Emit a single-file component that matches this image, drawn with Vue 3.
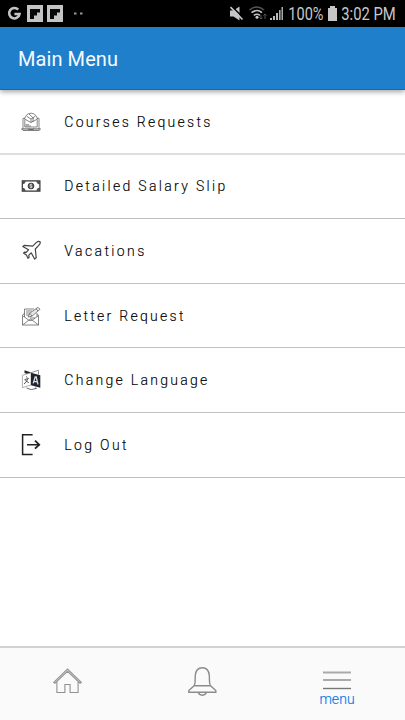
<script setup>
const items = [
  { icon: 'course', label: 'Courses Requests', width: 147.8 },
  { icon: 'money', label: 'Detailed Salary Slip', width: 162.8 },
  { icon: 'plane', label: 'Vacations', width: 81.8 },
  { icon: 'letter', label: 'Letter Request', width: 121 },
  { icon: 'language', label: 'Change Language', width: 144.8 },
  { icon: 'logout', label: 'Log Out', width: 64 }
]
</script>

<template>
  <main class="screen">
    <div class="status">
      <svg class="notifications" width="90" height="27" viewBox="0 0 90 27">
        <path d="M18.2 9.7A5.2 5.2 0 1 0 19.5 14H14.4" fill="none" stroke="#c4c4c4" stroke-width="2.6" />
        <g v-for="x in [27, 47]" :key="x" :transform="`translate(${x} 5)`">
          <path d="M0 0H16V17H0Z" fill="#c4c4c4" />
          <path d="M3 4H13V7.5H10V10.5H7V14H3Z" fill="#080808" />
        </g>
        <path d="M74 12.5H76.5V14.5H74ZM80 12.5H82.5V14.5H80Z" fill="#999" />
      </svg>
      <svg class="system" width="177" height="27" viewBox="228 0 177 27">
        <path d="M230 10.5H233.5L239.5 6.5V20.5L233.5 16.5H230Z" fill="#c6c6c6" />
        <path d="M231.5 6L244 18.5" stroke="#000" stroke-width="1.6" />
        <path d="M230.5 7.2L242.5 19.5" stroke="#c6c6c6" stroke-width="1.7" />
        <g fill="none" stroke-width="1.6">
          <path d="M249.5 10Q256.5 4 264 10" stroke="#555" />
          <path d="M251.5 12.7Q257 8.3 262 12.7M253.8 15.4Q257 13 260 15.4" stroke="#c4c4c4" />
          <path d="M261 15V19M259.5 17.5L261 19L262.5 17.5M265 19V14M263.5 15.5L265 14L266.5 15.5" stroke="#555" stroke-width="1" />
        </g>
        <circle cx="257" cy="17.3" r="1.5" fill="#ccc" />
        <path d="M270 18H272V20H270ZM273 16H275V20H273ZM276 13H278V20H276Z" fill="#bbb" />
        <path d="M279 10H280.6V20H279ZM281.5 7H283V20H281.5Z" fill="#aaa" />
        <g transform="translate(288.3 20) scale(.83 1)"><text textLength="42.4" lengthAdjust="spacingAndGlyphs">100%</text></g>
        <path d="M330 6H335V8H337V21H328V8H330Z" fill="#c6c6c6" />
        <g transform="translate(341.3 20) scale(.83 1)"><text textLength="65.6" lengthAdjust="spacingAndGlyphs">3:02 PM</text></g>
      </svg>
    </div>
    <header><h1>Main Menu</h1></header>
    <nav class="list">
      <a v-for="item in items" :key="item.label" class="row">
        <svg class="icon" width="20" height="22" viewBox="0 0 20 22" fill="none" stroke="#444" stroke-width=".8">
          <g v-if="item.icon === 'course'" stroke="#555">
            <path d="M2 17.8V7.3H4M16 7.3H18V17.8M3.8 16V8.5M16.2 16V8.5M3.5 8Q5 2.4 10 2.2Q15 2.4 16.5 8L10 11.5L3.5 8M5.7 5.3L10 8L14.5 5M10 8V11.5M8 3L13 7.8M12 7V11M3.8 16H16.2M4.5 13.7H8M4.5 15H10" stroke-width=".7" />
            <path d="M.5 17.8H19.5L18.2 19.4H2Z" fill="#ddd" /><path d="M7 17.8L8 18.5H12L13 17.8" />
          </g>
          <g v-else-if="item.icon === 'money'">
            <path d="M1.3 5.8H18.9V16.2H1.3Z" stroke="#333" stroke-width="1.2" />
            <path d="M1.5 6.5V9Q4 8.7 4.2 6.5ZM15.8 6.5Q16 8.7 18.5 9V6.5ZM1.5 15.5V13Q4 13.3 4.2 15.5ZM15.8 15.5Q16 13.3 18.5 13V15.5Z" fill="#555" />
            <circle cx="10" cy="11" r="2.9" fill="#666" stroke="#222" /><path d="M11 9.2Q8.6 9 9 10.5Q11.5 11.2 10.8 12.7H8.9M10 8.7V13.2" stroke="#fff" stroke-width=".5" />
          </g>
          <g v-else-if="item.icon === 'plane'" stroke="#444" stroke-width="1.2" stroke-linejoin="round">
            <path d="M1.8 6.5L3.2 5.4L11.7 6.1L15.2 2.6Q17.6 .6 19 1.8Q20 3.2 17.5 5.7L14.3 9L15.2 17.7L13.6 19L10.2 12.8L7.8 15.2L8.1 17.3L7 18.3L5.4 15.1L2.5 13.1L3.5 12.1L5.2 12.4L7.5 9.8Z" />
          </g>
          <g v-else-if="item.icon === 'letter'" stroke="#666">
            <path d="M1.5 10.5L3.5 8V4H13M16.5 9.2L17.5 10.5V20H1.5V10.5L8 15.4H11L17.5 10.5M1.5 20L8 15L9.5 14L11 15L17.5 20M3.5 8V12M16 8V12M5 6H11M5 8H9M5 10H8" />
            <path d="M7.2 12L8.7 8.3L17 2.3L19 4.3L11 11.2ZM9 8.5L11 11M15 3.8L17 6M9 13H14" fill="#e8e8e8" />
          </g>
          <g v-else-if="item.icon === 'language'">
            <path d="M3.5 4V1.3L10.3 3.6L10 6.5Z" fill="#222633" stroke="none" />
            <path d="M10.3 3.6L17.5 1.2V5.5" stroke="#777" />
            <path d="M1.4 6.3L10 3.8V16L1.4 18.6Z" fill="#fff" stroke="#999" /><path d="M10 3.8L19.3 6.2V18.8L10 16.2Z" fill="#202330" stroke="none" />
            <path d="M5 7.6L6.4 8.4M3.5 10.6L7.8 9.4M6.6 9.8Q6.2 13 3 15M4.2 11.5L7.8 13.7" stroke-width=".9" />
            <path d="M12.2 14.4L14.2 8H15.2L17 15.5M12.9 12.3L16.2 12.9" stroke="#ddd" stroke-width="1.3" />
            <path d="M5.5 19Q10 22 15.5 19.4M15.5 19.4L14 18.8" />
          </g>
          <g v-else stroke="#222" stroke-width="1.5">
            <path d="M11.6 .8H1.6V20.6H11.6M6 10.7H18.5" /><path d="M14 6.7L18.2 10.7L14 14.7" stroke-width="1.8" />
          </g>
        </svg>
        <svg class="label" width="240" height="24"><text x="0.3" y="17" :textLength="item.width">{{ item.label }}</text></svg>
      </a>
    </nav>
    <footer>
      <a class="tab">
        <svg width="30" height="30" viewBox="0 0 30 30" fill="none" stroke="#929292" stroke-width="1.1">
          <path d="M1.7 15.3L15.5 2L29.3 15.3L28.1 16.2L15.5 4.3L2.9 16.2ZM4.9 14.4V25.5H12.9V17.5H18.1V25.5H26.1V14.4" />
        </svg>
      </a>
      <a class="tab">
        <svg width="30" height="30" viewBox="0 0 30 30" fill="none" stroke="#8c8c8c" stroke-width="1.4">
          <path transform="translate(.3 0)" d="M7 18.5C8.3 16 7.7 13 8 8.3C8.5 3.3 11.5 .8 15 .8S21.5 3.3 22 8.3C22.3 13 21.7 16 23 18.5L28.5 23.5V25.2H1.5V23.5ZM7 18.8H23M11 25.2Q11.5 28.2 15 28.2T19 25.2" />
        </svg>
      </a>
      <a class="tab">
        <svg width="30" height="30" viewBox="0 0 30 30">
          <path d="M1 4.4H29V6.4H1ZM1 12H29V14H1Z" fill="#aaa" /><path d="M1 20.8H29V22.2H1Z" fill="#777" />
        </svg>
        <svg class="caption" width="40" height="18"><text x="2.4" y="12.3" textLength="35.2">menu</text></svg>
      </a>
    </footer>
  </main>
</template>

<style>
body { margin: 0; }
</style>

<style scoped>
.screen { width: 405px; height: 720px; display: flex; flex-direction: column; background: #fff; font-family: Roboto, "Liberation Sans", sans-serif; overflow: hidden; }
.status { height: 27px; flex: none; display: flex; justify-content: space-between; background: #000; }
.system text { font-size: 17.6px; fill: #c8c8c8; }
header { height: 63px; flex: none; box-sizing: border-box; background: #207fca; border-bottom: 1px solid #126bb5; display: flex; align-items: center; padding: 2px 18px 0; box-shadow: 0 2px 5px rgba(0, 0, 0, .35); }
h1 { margin: 0; font-size: 20px; line-height: 26px; letter-spacing: .08px; font-weight: 400; color: #f6faff; }
.list { flex: 1; display: flex; flex-direction: column; }
.row { height: 64.6px; flex: none; box-sizing: border-box; border-bottom: 1px solid #c0c0c0; display: flex; align-items: center; padding: 0 0 0 21px; }
.row:first-child { height: 64.6px; padding-top: 1px; border-bottom: 2px solid #dedede; }
.icon { flex: none; }
.label { margin-left: 23px; overflow: visible; }
.label text { font-size: 14px; font-weight: 300; letter-spacing: 1.8px; fill: #000; stroke: #000; stroke-width: .12px; }
footer { height: 74px; flex: none; box-sizing: border-box; border-top: 2px solid #d2d2d2; background: #fafafa; display: flex; padding-right: 1px; }
.tab { flex: 1; display: flex; flex-direction: column; align-items: center; padding-top: 19px; }
.caption { margin-top: -5px; overflow: visible; }
.caption text { font-size: 14px; font-weight: 300; fill: #0078e8; stroke: #0078e8; stroke-width: .15px; }
</style>
